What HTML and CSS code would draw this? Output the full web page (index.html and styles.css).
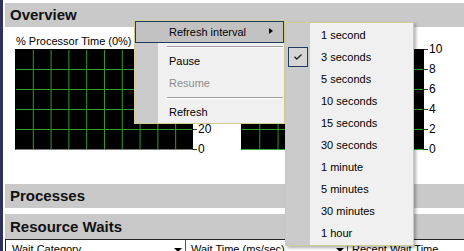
FILE: index.html
```html
<!DOCTYPE html>
<html lang="en">
<head>
    <meta charset="UTF-8">
    <title>Activity Monitor</title>
    <link rel="stylesheet" href="styles.css">
</head>
<body>
    <div class="monitor">
        <section class="panel">
            <h2 class="panel-title">Overview</h2>
            <div class="overview">
                <div class="graph graph-cpu">
                    <div class="graph-label">% Processor Time (0%)</div>
                    <div class="graph-body">
                        <div class="plot"></div>
                        <div class="axis">
                            <span>100</span><span>80</span><span>60</span><span>40</span><span>20</span><span>0</span>
                        </div>
                    </div>
                </div>
                <div class="graph graph-tasks">
                    <div class="graph-label">Waiting Tasks (0)</div>
                    <div class="graph-body">
                        <div class="plot"></div>
                        <div class="axis">
                            <span>10</span><span>8</span><span>6</span><span>4</span><span>2</span><span>0</span>
                        </div>
                    </div>
                </div>
            </div>
        </section>

        <section class="panel panel-collapsed">
            <h2 class="panel-title">Processes</h2>
        </section>

        <section class="panel">
            <h2 class="panel-title panel-title-tall">Resource Waits</h2>
            <div class="grid-head">
                <div class="col col-category">Wait Category<span class="drop"></span></div>
                <div class="col col-wait">Wait Time (ms/sec)<span class="drop"></span></div>
                <div class="col col-recent">Recent Wait Time (ms/sec)</div>
            </div>
        </section>
    </div>

    <div class="menu main-menu">
        <div class="menu-item active">Refresh interval</div>
        <div class="menu-sep"></div>
        <div class="menu-item">Pause</div>
        <div class="menu-item disabled">Resume</div>
        <div class="menu-sep"></div>
        <div class="menu-item">Refresh</div>
    </div>

    <div class="menu sub-menu">
        <div class="menu-item">1 second</div>
        <div class="menu-item checked">
            <span class="check">
                <svg width="8" height="6" viewBox="0 0 8 6"><polyline points="0.5,2.8 2.8,5 7.5,0.5" fill="none" stroke="#222" stroke-width="1.3"/></svg>
            </span>3 seconds
        </div>
        <div class="menu-item">5 seconds</div>
        <div class="menu-item">10 seconds</div>
        <div class="menu-item">15 seconds</div>
        <div class="menu-item">30 seconds</div>
        <div class="menu-item">1 minute</div>
        <div class="menu-item">5 minutes</div>
        <div class="menu-item">30 minutes</div>
        <div class="menu-item">1 hour</div>
    </div>
</body>
</html>
```

FILE: styles.css
```css
body {
    font-family: 'Liberation Sans', Arial, sans-serif;
    font-size: 11px;
    margin: 0;
    padding: 0;
    background: #fff;
    color: #000;
    overflow: hidden;
}

.monitor {
    border-left: 3px solid #2e3160;
    padding: 3px 0 0 2px;
    height: 251px;
    box-sizing: border-box;
}

.panel-title {
    margin: 0;
    height: 24px;
    line-height: 24px;
    padding-left: 5px;
    background: #c9c9c9;
    font-size: 15px;
    font-weight: bold;
    color: #111;
}

.panel-title-tall {
    height: 25px;
    line-height: 25px;
}

.panel-collapsed {
    margin-bottom: 6px;
}

.overview {
    height: 157px;
    box-sizing: border-box;
    padding: 8px 0 0 10px;
    display: flex;
}

.graph-cpu {
    width: 226px;
}

.graph-label {
    line-height: 13px;
    padding-left: 1px;
    margin-bottom: 1px;
}

.graph-body {
    display: flex;
    align-items: flex-start;
}

.plot {
    width: 178px;
    height: 101px;
    box-sizing: border-box;
    background-color: #000;
    background-image: linear-gradient(90deg, #2f9d2f 1px, transparent 1px),
                      linear-gradient(#2f9d2f 1px, transparent 1px);
    background-size: 17.8px 20px;
    background-origin: border-box;
    border: 1px solid #000;
    border-bottom: 1px dotted #8a8a8a;
}

.graph-tasks .plot {
    width: 183px;
    background-size: 18.3px 20px;
}

.axis {
    height: 112px;
    margin-top: -6px;
    display: flex;
    flex-direction: column;
    justify-content: space-between;
}

.axis span {
    display: flex;
    align-items: center;
    height: 12px;
    font-size: 12px;
    line-height: 12px;
}

.axis span::before {
    content: '';
    width: 4px;
    height: 1px;
    background: #333;
    margin-right: 1px;
}

.grid-head {
    display: flex;
    height: 20px;
    border-top: 1px solid #222;
    border-left: 1px solid #222;
    background: #fff;
}

.col {
    display: flex;
    justify-content: space-between;
    align-items: flex-start;
    padding-top: 2px;
    line-height: 14px;
    box-sizing: border-box;
    border-right: 1px solid #555;
}

.col-category {
    width: 180px;
    padding-left: 6px;
}

.col-wait {
    width: 162px;
    padding-left: 5px;
}

.col-recent {
    flex: 1;
    padding-left: 4px;
    border-right: none;
}

.drop {
    width: 0;
    height: 0;
    margin: 6px 3px 0 0;
    border-top: 4px solid #000;
    border-left: 4px solid transparent;
    border-right: 4px solid transparent;
}

.menu {
    position: absolute;
    box-sizing: border-box;
    border: 1px solid #cdcd94;
    background: #f0f0f0;
}

.main-menu {
    left: 134px;
    top: 20px;
    width: 151px;
    background: linear-gradient(90deg, #cbcbcb 23px, #f0f0f0 23px);
}

.sub-menu {
    left: 285px;
    top: 22px;
    width: 129px;
    padding: 1px 0;
    background: linear-gradient(90deg, #cbcbcb 24px, #f0f0f0 24px);
    box-shadow: 2px 2px 3px rgba(0, 0, 0, 0.3);
}

.menu-item {
    position: relative;
    height: 22px;
    line-height: 22px;
    padding-left: 34px;
    box-sizing: border-box;
    white-space: nowrap;
}

.sub-menu .menu-item {
    padding-left: 35px;
}

.menu-item.active {
    background: #c2c2c2;
    border: 1px solid #1f3b61;
    line-height: 20px;
    padding-left: 33px;
}

.menu-item.active::after {
    content: '';
    position: absolute;
    right: 10px;
    top: 6px;
    border-left: 4px solid #000;
    border-top: 3.5px solid transparent;
    border-bottom: 3.5px solid transparent;
}

.menu-item.disabled {
    color: #8c8c8c;
}

.menu-sep {
    height: 1px;
    background: #a0a0a0;
    border-bottom: 1px solid #fff;
    margin: 3px 1px 2px 32px;
}

.check {
    position: absolute;
    left: 2px;
    top: 1px;
    width: 20px;
    height: 20px;
    box-sizing: border-box;
    border: 1px solid #1f3b61;
    background: #d6d6d6;
    display: flex;
    align-items: center;
    justify-content: center;
}

.check svg {
    display: block;
}
```
